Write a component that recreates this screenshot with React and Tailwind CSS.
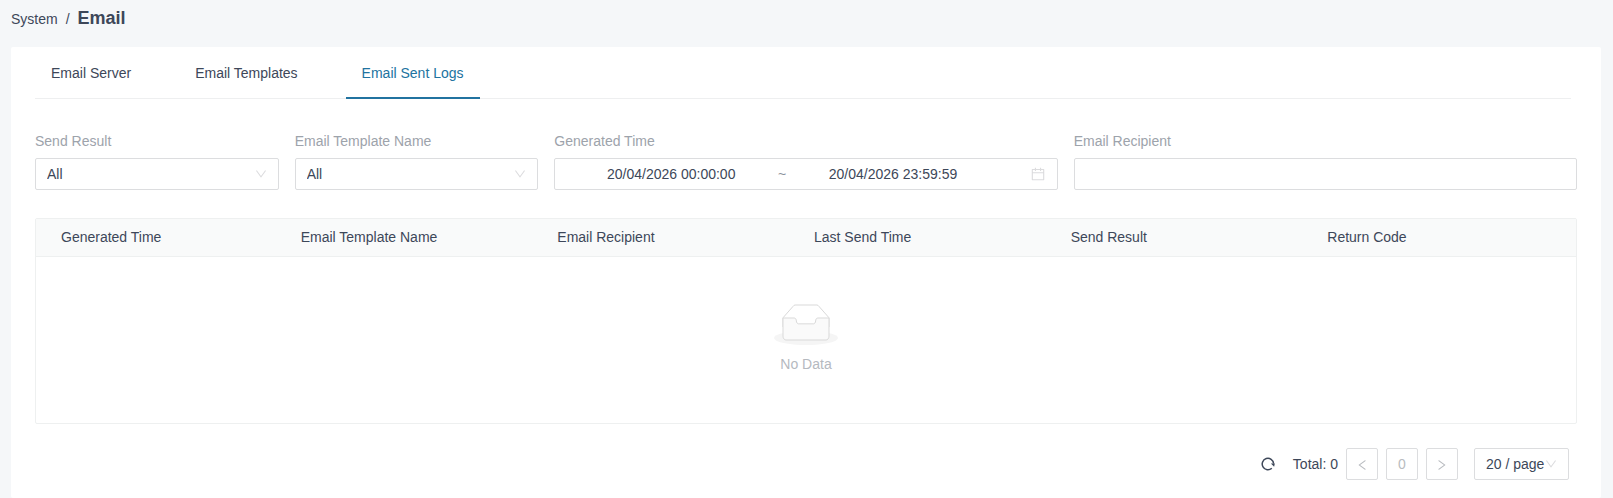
import { useState } from "react";

const TABS = ["Email Server", "Email Templates", "Email Sent Logs"];

const COLUMNS = [
  "Generated Time",
  "Email Template Name",
  "Email Recipient",
  "Last Send Time",
  "Send Result",
  "Return Code",
];

function DownIcon({ className }) {
  return (
    <svg viewBox="64 64 896 896" fill="currentColor" className={className} aria-hidden="true">
      <path d="M884 256h-75c-5.1 0-9.9 2.5-12.9 6.6L512 654.2 227.9 262.6c-3-4.1-7.8-6.6-12.9-6.6h-75c-6.5 0-10.3 7.4-6.5 12.7l352.6 486.1c12.8 17.6 39 17.6 51.7 0l352.6-486.1c3.9-5.3.1-12.7-6.4-12.7z" />
    </svg>
  );
}

function CalendarIcon() {
  return (
    <svg viewBox="64 64 896 896" fill="currentColor" className="h-3.5 w-3.5 text-[#dcdcde]" aria-hidden="true">
      <path d="M880 184H712v-64c0-4.4-3.6-8-8-8h-56c-4.4 0-8 3.6-8 8v64H384v-64c0-4.4-3.6-8-8-8h-56c-4.4 0-8 3.6-8 8v64H144c-17.7 0-32 14.3-32 32v664c0 17.7 14.3 32 32 32h736c17.7 0 32-14.3 32-32V216c0-17.7-14.3-32-32-32zm-40 656H184V460h656v380zM184 392V256h128v48c0 4.4 3.6 8 8 8h56c4.4 0 8-3.6 8-8v-48h256v48c0 4.4 3.6 8 8 8h56c4.4 0 8-3.6 8-8v-48h128v136H184z" />
    </svg>
  );
}

function ReloadIcon() {
  return (
    <svg viewBox="0 0 14 14" fill="none" className="h-3.5 w-3.5" aria-hidden="true">
      <path d="M10.8 11.2A5.7 5.7 0 1 1 12.6 6.6" stroke="currentColor" strokeWidth="1.5" />
      <path d="M9.9 6.5h3.9l-.7 3.3z" fill="currentColor" />
    </svg>
  );
}

function EmptyIcon() {
  return (
    <svg width="64" height="41" viewBox="0 0 64 41" aria-hidden="true">
      <g transform="translate(0 1)" fill="none" fillRule="evenodd">
        <ellipse fill="#f5f5f5" cx="32" cy="33" rx="32" ry="7" />
        <g fillRule="nonzero" stroke="#d9d9d9">
          <path d="M55 12.76L44.854 1.258C44.367.474 43.656 0 42.907 0H21.093c-.749 0-1.46.474-1.947 1.257L9 12.761V22h46v-9.24z" />
          <path d="M41.613 15.931c0-1.605.994-2.93 2.227-2.931H55v18.137C55 33.26 53.68 35 52.05 35h-40.1C10.32 35 9 33.259 9 31.137V13h11.16c1.233 0 2.227 1.323 2.227 2.928v.022c0 1.605 1.005 2.901 2.237 2.901h14.752c1.232 0 2.237-1.308 2.237-2.913v-.007z" fill="#fafafa" />
        </g>
      </g>
    </svg>
  );
}

function SelectField({ id, label }) {
  return (
    <div>
      <label htmlFor={id} className="mb-1.5 block text-[#9da3ab]">{label}</label>
      <div className="relative">
        <select id={id} className="h-8 w-full appearance-none rounded-xs border border-[#dcdddf] bg-white px-[11px] outline-none">
          <option>All</option>
        </select>
        <DownIcon className="pointer-events-none absolute top-2.5 right-3 h-3 w-3 text-[#dcdcde]" />
      </div>
    </div>
  );
}

export default function App() {
  const [tab, setTab] = useState("Email Sent Logs");
  const [from, setFrom] = useState("20/04/2026 00:00:00");
  const [to, setTo] = useState("20/04/2026 23:59:59");

  return (
    <div className="flex min-h-screen flex-col bg-[#f5f7f9] pr-3 pl-[11px] font-['Liberation_Sans',Arial,sans-serif] text-sm leading-[22px] text-[#3d4759]">
      <nav className="flex h-[47px] items-baseline gap-2 pt-1" aria-label="Breadcrumb">
        <a href="#system">System</a>
        <span>/</span>
        <h1 className="text-lg leading-7 font-bold">Email</h1>
      </nav>

      <main className="flex-1 rounded-xs bg-white px-6 pb-4">
        <div role="tablist" className="mr-1.5 flex gap-8 border-b border-[#eeeff0]">
          {TABS.map(name => (
            <button
              key={name}
              role="tab"
              aria-selected={tab === name}
              onClick={() => setTab(name)}
              className={
                "-mb-px border-b-2 px-4 pt-[15px] pb-[13px] " +
                (tab === name ? "border-[#2173a0] text-[#2173a0]" : "border-transparent")
              }
            >
              {name}
            </button>
          ))}
        </div>

        <form className="mt-[31px] grid grid-cols-6 gap-4">
          <SelectField id="send-result" label="Send Result" />
          <SelectField id="template-name" label="Email Template Name" />
          <div className="col-span-2">
            <label htmlFor="time-from" className="mb-1.5 block text-[#9da3ab]">Generated Time</label>
            <div className="flex h-8 items-center rounded-xs border border-[#dcdddf] px-2.5">
              <input
                id="time-from"
                value={from}
                onChange={e => setFrom(e.target.value)}
                className="w-[44%] text-center outline-none"
              />
              <span className="w-2.5 text-center text-[#8b919b]">~</span>
              <input
                aria-label="Generated time end"
                value={to}
                onChange={e => setTo(e.target.value)}
                className="w-[44%] text-center outline-none"
              />
              <span className="ml-auto pr-0.5"><CalendarIcon /></span>
            </div>
          </div>
          <div className="col-span-2">
            <label htmlFor="recipient" className="mb-1.5 block text-[#9da3ab]">Email Recipient</label>
            <input id="recipient" className="block h-8 w-full rounded-xs border border-[#dcdddf] px-[11px] outline-none" />
          </div>
        </form>

        <div className="mt-7 rounded-xs border border-[#eef0f0]">
          <table className="w-full table-fixed">
            <thead>
              <tr className="border-b border-[#eef0f0] bg-[#f9fafa]">
                {COLUMNS.map(name => (
                  <th key={name} scope="col" className="h-[37px] px-2 text-left font-normal first:pl-[25px]">
                    {name}
                  </th>
                ))}
              </tr>
            </thead>
            <tbody>
              <tr>
                <td colSpan={6} className="h-[167px]">
                  <div className="flex flex-col items-center gap-2 pb-px text-[#b5b9bf]">
                    <EmptyIcon />
                    <p>No Data</p>
                  </div>
                </td>
              </tr>
            </tbody>
          </table>
        </div>

        <div className="mt-6 mr-2 flex items-center justify-end gap-2">
          <button aria-label="Refresh" className="mr-2.5"><ReloadIcon /></button>
          <span>Total: 0</span>
          <button aria-label="Previous page" disabled className="flex h-8 w-8 items-center justify-center rounded-xs border border-[#dcdddf] pt-0.5 text-[#b9bcc0]">
            <DownIcon className="h-3 w-3 rotate-90" />
          </button>
          <button disabled className="h-8 w-8 rounded-xs border border-[#dcdddf] text-[#b9bcc0]">0</button>
          <button aria-label="Next page" disabled className="flex h-8 w-8 items-center justify-center rounded-xs border border-[#dcdddf] pt-0.5 text-[#b9bcc0]">
            <DownIcon className="h-3 w-3 -rotate-90" />
          </button>
          <div className="relative ml-2">
            <select aria-label="Page size" className="h-8 w-[95px] appearance-none rounded-xs border border-[#dcdddf] bg-white pl-[11px] outline-none">
              <option>20 / page</option>
            </select>
            <DownIcon className="pointer-events-none absolute top-2.5 right-3 h-3 w-3 text-[#dcdcde]" />
          </div>
        </div>
      </main>
    </div>
  );
}
